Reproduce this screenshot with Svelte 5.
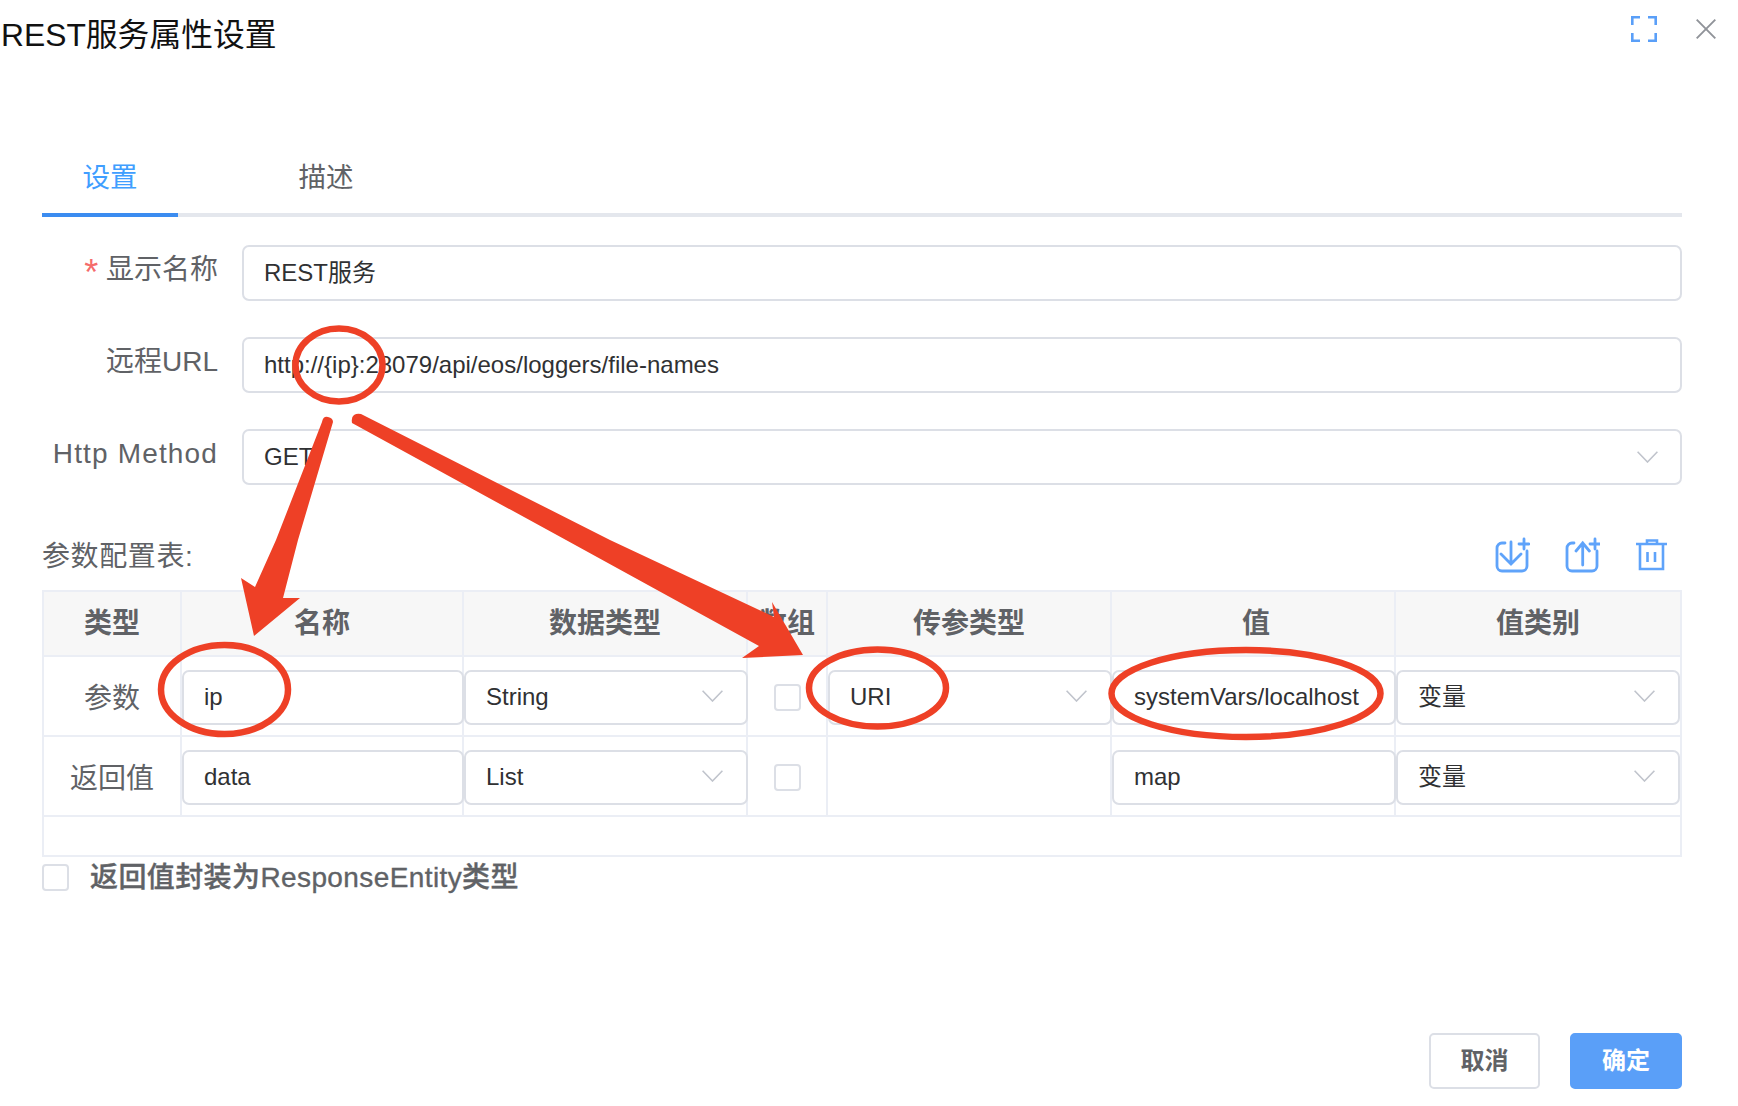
<script>
  const columns = ['类型', '名称', '数据类型', '数组', '传参类型', '值', '值类别'];
</script>

<div class="app">
  <header class="head">
    <div class="title">REST服务属性设置</div>
    <svg class="expand" viewBox="0 0 26 26" fill="none" stroke="#5a9ff8" stroke-width="2.6">
      <path d="M1.3 9V1.3H9M17 1.3H24.7V9M24.7 17V24.7H17M9 24.7H1.3V17" />
    </svg>
    <svg class="close" viewBox="0 0 20 20" fill="none" stroke="#909399" stroke-width="1.9">
      <path d="M.7.7 19.3 19.3M19.3.7.7 19.3" />
    </svg>
  </header>

  <div class="tabs">
    <div class="tab active">设置</div>
    <div class="tab">描述</div>
  </div>

  <div class="form">
    <div class="row">
      <div class="label"><span class="req">*</span> 显示名称</div>
      <div class="field wide">REST服务</div>
    </div>
    <div class="row">
      <div class="label">远程URL</div>
      <div class="field wide">http://{'{'}ip{'}'}:28079/api/eos/loggers/file-names</div>
    </div>
    <div class="row">
      <div class="label spaced">Http Method</div>
      <div class="field wide select">GET
        <svg class="chev" viewBox="0 0 21 12" fill="none" stroke="#c0c4cc" stroke-width="1.6"><path d="M.6.8 10.5 11 20.4.8" /></svg>
      </div>
    </div>
  </div>

  <div class="param-head">
    <div class="param-title">参数配置表:</div>
    <div class="tools">
      <svg class="tool" viewBox="0 0 36 36" fill="none" stroke="#5fa3fa" stroke-width="2.8" stroke-linecap="round">
        <path d="M11 6H8a5 5 0 0 0-5 5V29a5 5 0 0 0 5 5H28a5 5 0 0 0 5-5V14" />
        <path d="M25 7H35M30 2V12M17 5V27M7 17 17 27 27 17" />
      </svg>
      <svg class="tool up" viewBox="0 0 36 36" fill="none" stroke="#5fa3fa" stroke-width="2.8" stroke-linecap="round">
        <path d="M10 6H8a5 5 0 0 0-5 5V29a5 5 0 0 0 5 5H28a5 5 0 0 0 5-5V14" />
        <path d="M26 7H36M31 2V12M18.7 6V28M12 14 18.7 6 25.400 14" />
      </svg>
      <svg class="trash" viewBox="0 0 31 32" fill="none" stroke="#5fa3fa" stroke-width="2.6">
        <path d="M0 5H31M11 5V1.500H21V5M4 5V30H27V5M11.500 13V23M19 13V23" />
      </svg>
    </div>
  </div>

  <div class="table">
    <div class="tr th">
      {#each columns as c}<div class="cell hcell">{c}</div>{/each}
    </div>
    <div class="tr">
      <div class="cell tcell">参数</div>
      <div class="cell"><div class="field">ip</div></div>
      <div class="cell"><div class="field select">String<svg class="chev" viewBox="0 0 21 12" fill="none" stroke="#c0c4cc" stroke-width="1.6"><path d="M.6.8 10.5 11 20.4.8" /></svg></div></div>
      <div class="cell ccell"><span class="box"></span></div>
      <div class="cell"><div class="field select">URI<svg class="chev" viewBox="0 0 21 12" fill="none" stroke="#c0c4cc" stroke-width="1.6"><path d="M.6.8 10.5 11 20.4.8" /></svg></div></div>
      <div class="cell"><div class="field">systemVars/localhost</div></div>
      <div class="cell"><div class="field select">变量<svg class="chev" viewBox="0 0 21 12" fill="none" stroke="#c0c4cc" stroke-width="1.6"><path d="M.6.8 10.5 11 20.4.8" /></svg></div></div>
    </div>
    <div class="tr">
      <div class="cell tcell">返回值</div>
      <div class="cell"><div class="field">data</div></div>
      <div class="cell"><div class="field select">List<svg class="chev" viewBox="0 0 21 12" fill="none" stroke="#c0c4cc" stroke-width="1.6"><path d="M.6.8 10.5 11 20.4.8" /></svg></div></div>
      <div class="cell ccell"><span class="box"></span></div>
      <div class="cell"></div>
      <div class="cell"><div class="field">map</div></div>
      <div class="cell"><div class="field select">变量<svg class="chev" viewBox="0 0 21 12" fill="none" stroke="#c0c4cc" stroke-width="1.6"><path d="M.6.8 10.5 11 20.4.8" /></svg></div></div>
    </div>
    <div class="empty"></div>
  </div>

  <div class="wrap-row">
    <span class="box"></span>
    <span class="wrap-label">返回值封装为ResponseEntity类型</span>
  </div>

  <div class="footer">
    <div class="btn">取消</div>
    <div class="btn primary">确定</div>
  </div>

  <svg class="marks" viewBox="0 0 1738 1106" fill="none">
    <g stroke="#ee4026" stroke-width="6.500">
      <ellipse cx="339" cy="365" rx="43.500" ry="36.500" />
      <ellipse cx="224.500" cy="689.500" rx="63.500" ry="44.500" />
      <ellipse cx="877.500" cy="688" rx="68.500" ry="38.500" />
      <ellipse cx="1246" cy="693.500" rx="134.500" ry="43.500" />
    </g>
    <g fill="#ee4026">
      <path d="M322 422Q323 416 328 417T333 422L298 540 283 598H300L254 636 241 578 255 587 276 540Z" />
      <path d="M352 423Q351 417 354 415T361 414L610 540 774 617 772 602 803 655 742 658 759 646 566 540Z" />
    </g>
  </svg>
</div>

<style>
  :global(body) {
    margin: 0;
    background: #fff;
  }
  .app {
    position: relative;
    width: 1738px;
    height: 1106px;
    overflow: hidden;
    background: #fff;
    font-family: "Liberation Sans", "Noto Sans CJK SC", sans-serif;
    color: #303133;
  }
  .head {
    display: flex;
    align-items: flex-start;
    height: 68px;
    padding: 0 22px 0 1px;
  }
  .title {
    flex: 1;
    font-size: 31.8px;
    line-height: 70px;
    color: #111;
  }
  .expand {
    width: 26px;
    height: 26px;
    margin: 16px 39px 0 0;
  }
  .close {
    width: 20px;
    height: 20px;
    margin-top: 19px;
  }
  .tabs {
    display: flex;
    gap: 80px;
    margin: 71px 56px 0 42px;
    border-bottom: 4px solid #e4e7ed;
  }
  .tab {
    box-sizing: border-box;
    width: 136px;
    height: 78px;
    margin-bottom: -4px;
    padding-top: 2px;
    border-bottom: 4px solid transparent;
    text-align: center;
    font-size: 27.5px;
    line-height: 74px;
    color: #606266;
  }
  .tab.active {
    color: #409eff;
    border-bottom-color: #3b8cf0;
  }
  .form {
    display: flex;
    flex-direction: column;
    gap: 36px;
    margin: 28px 56px 0 42px;
  }
  .row {
    display: flex;
    align-items: flex-start;
  }
  .label {
    width: 176px;
    margin-right: 24px;
    text-align: right;
    font-size: 28px;
    line-height: 50px;
    color: #606266;
    white-space: nowrap;
  }
  .label.spaced {
    letter-spacing: 1.15px;
  }
  .req {
    color: #f56c6c;
    font-size: 36px;
    line-height: 0;
    vertical-align: -6px;
  }
  .field {
    position: relative;
    box-sizing: border-box;
    height: 55px;
    padding: 0 20px;
    display: flex;
    align-items: center;
    justify-content: space-between;
    border: 2px solid #dcdfe6;
    border-radius: 7px;
    background: #fff;
    font-size: 24px;
    line-height: 28px;
    color: #303133;
    white-space: nowrap;
  }
  .field.wide {
    flex: 1;
    height: 56px;
  }
  .chev {
    width: 21px;
    height: 12px;
    flex: none;
    margin-right: 2px;
  }
  .param-head {
    display: flex;
    align-items: center;
    justify-content: space-between;
    height: 50px;
    margin: 45px 71px 0 42px;
  }
  .param-title {
    padding-top: 4px;
    font-size: 28px;
    line-height: 34px;
    letter-spacing: .6px;
    color: #606266;
  }
  .tools {
    display: flex;
    align-items: center;
  }
  .tool {
    width: 36px;
    height: 36px;
  }
  .tool.up {
    margin-left: 34px;
  }
  .trash {
    width: 31px;
    height: 32px;
    margin-left: 36px;
  }
  .table {
    margin: 10px 56px 0 42px;
    border: 2px solid #ebeef5;
  }
  .tr {
    display: grid;
    grid-template-columns: 138px 282px 284px 80px 284px 284px 1fr;
    height: 80px;
    border-bottom: 2px solid #ebeef5;
    box-sizing: border-box;
  }
  .tr.th {
    height: 65px;
    background: #f7f7f7;
  }
  .cell {
    box-sizing: border-box;
    border-right: 2px solid #ebeef5;
    padding: 13px 0 0;
    min-width: 0;
  }
  .cell:last-child {
    border-right: 0;
  }
  .cell .field {
    margin-right: -2px;
    padding-bottom: 2px;
  }
  .cell:last-child .field {
    margin-right: 0;
  }
  .cell .chev {
    margin-right: 3px;
    margin-bottom: 1px;
  }
  .hcell {
    display: flex;
    align-items: center;
    justify-content: center;
    padding: 0;
    font-size: 28px;
    line-height: 34px;
    font-weight: 700;
    color: #606266;
  }
  .hcell:nth-child(6) {
    padding-left: 6px;
  }
  .tcell {
    display: flex;
    align-items: center;
    justify-content: center;
    padding: 5px 0 0;
    font-size: 28px;
    line-height: 34px;
    color: #606266;
  }
  .ccell {
    display: flex;
    justify-content: center;
    padding: 27px 0 0;
  }
  .box {
    display: block;
    flex: none;
    box-sizing: border-box;
    width: 27px;
    height: 27px;
    border: 2px solid #dcdfe6;
    border-radius: 4px;
    background: #fff;
  }
  .empty {
    height: 38px;
  }
  .wrap-row {
    display: flex;
    align-items: center;
    gap: 21px;
    margin: 7px 0 0 42px;
    height: 27px;
  }
  .wrap-label {
    font-size: 28px;
    line-height: 34px;
    font-weight: 500;
    letter-spacing: .4px;
    -webkit-text-stroke: .35px #606266;
    color: #606266;
    white-space: nowrap;
  }
  .footer {
    display: flex;
    justify-content: flex-end;
    gap: 30px;
    margin: 142px 56px 0 0;
  }
  .btn {
    box-sizing: border-box;
    width: 111px;
    height: 56px;
    display: flex;
    align-items: center;
    justify-content: center;
    border: 2px solid #dcdfe6;
    border-radius: 5px;
    font-size: 24px;
    line-height: 28px;
    font-weight: 700;
    color: #606266;
  }
  .btn.primary {
    width: 112px;
    background: #5a9ff8;
    border-color: #5a9ff8;
    color: #fff;
  }
  .marks {
    position: absolute;
    top: 0;
    left: 0;
    width: 1738px;
    height: 1106px;
    pointer-events: none;
  }
</style>
